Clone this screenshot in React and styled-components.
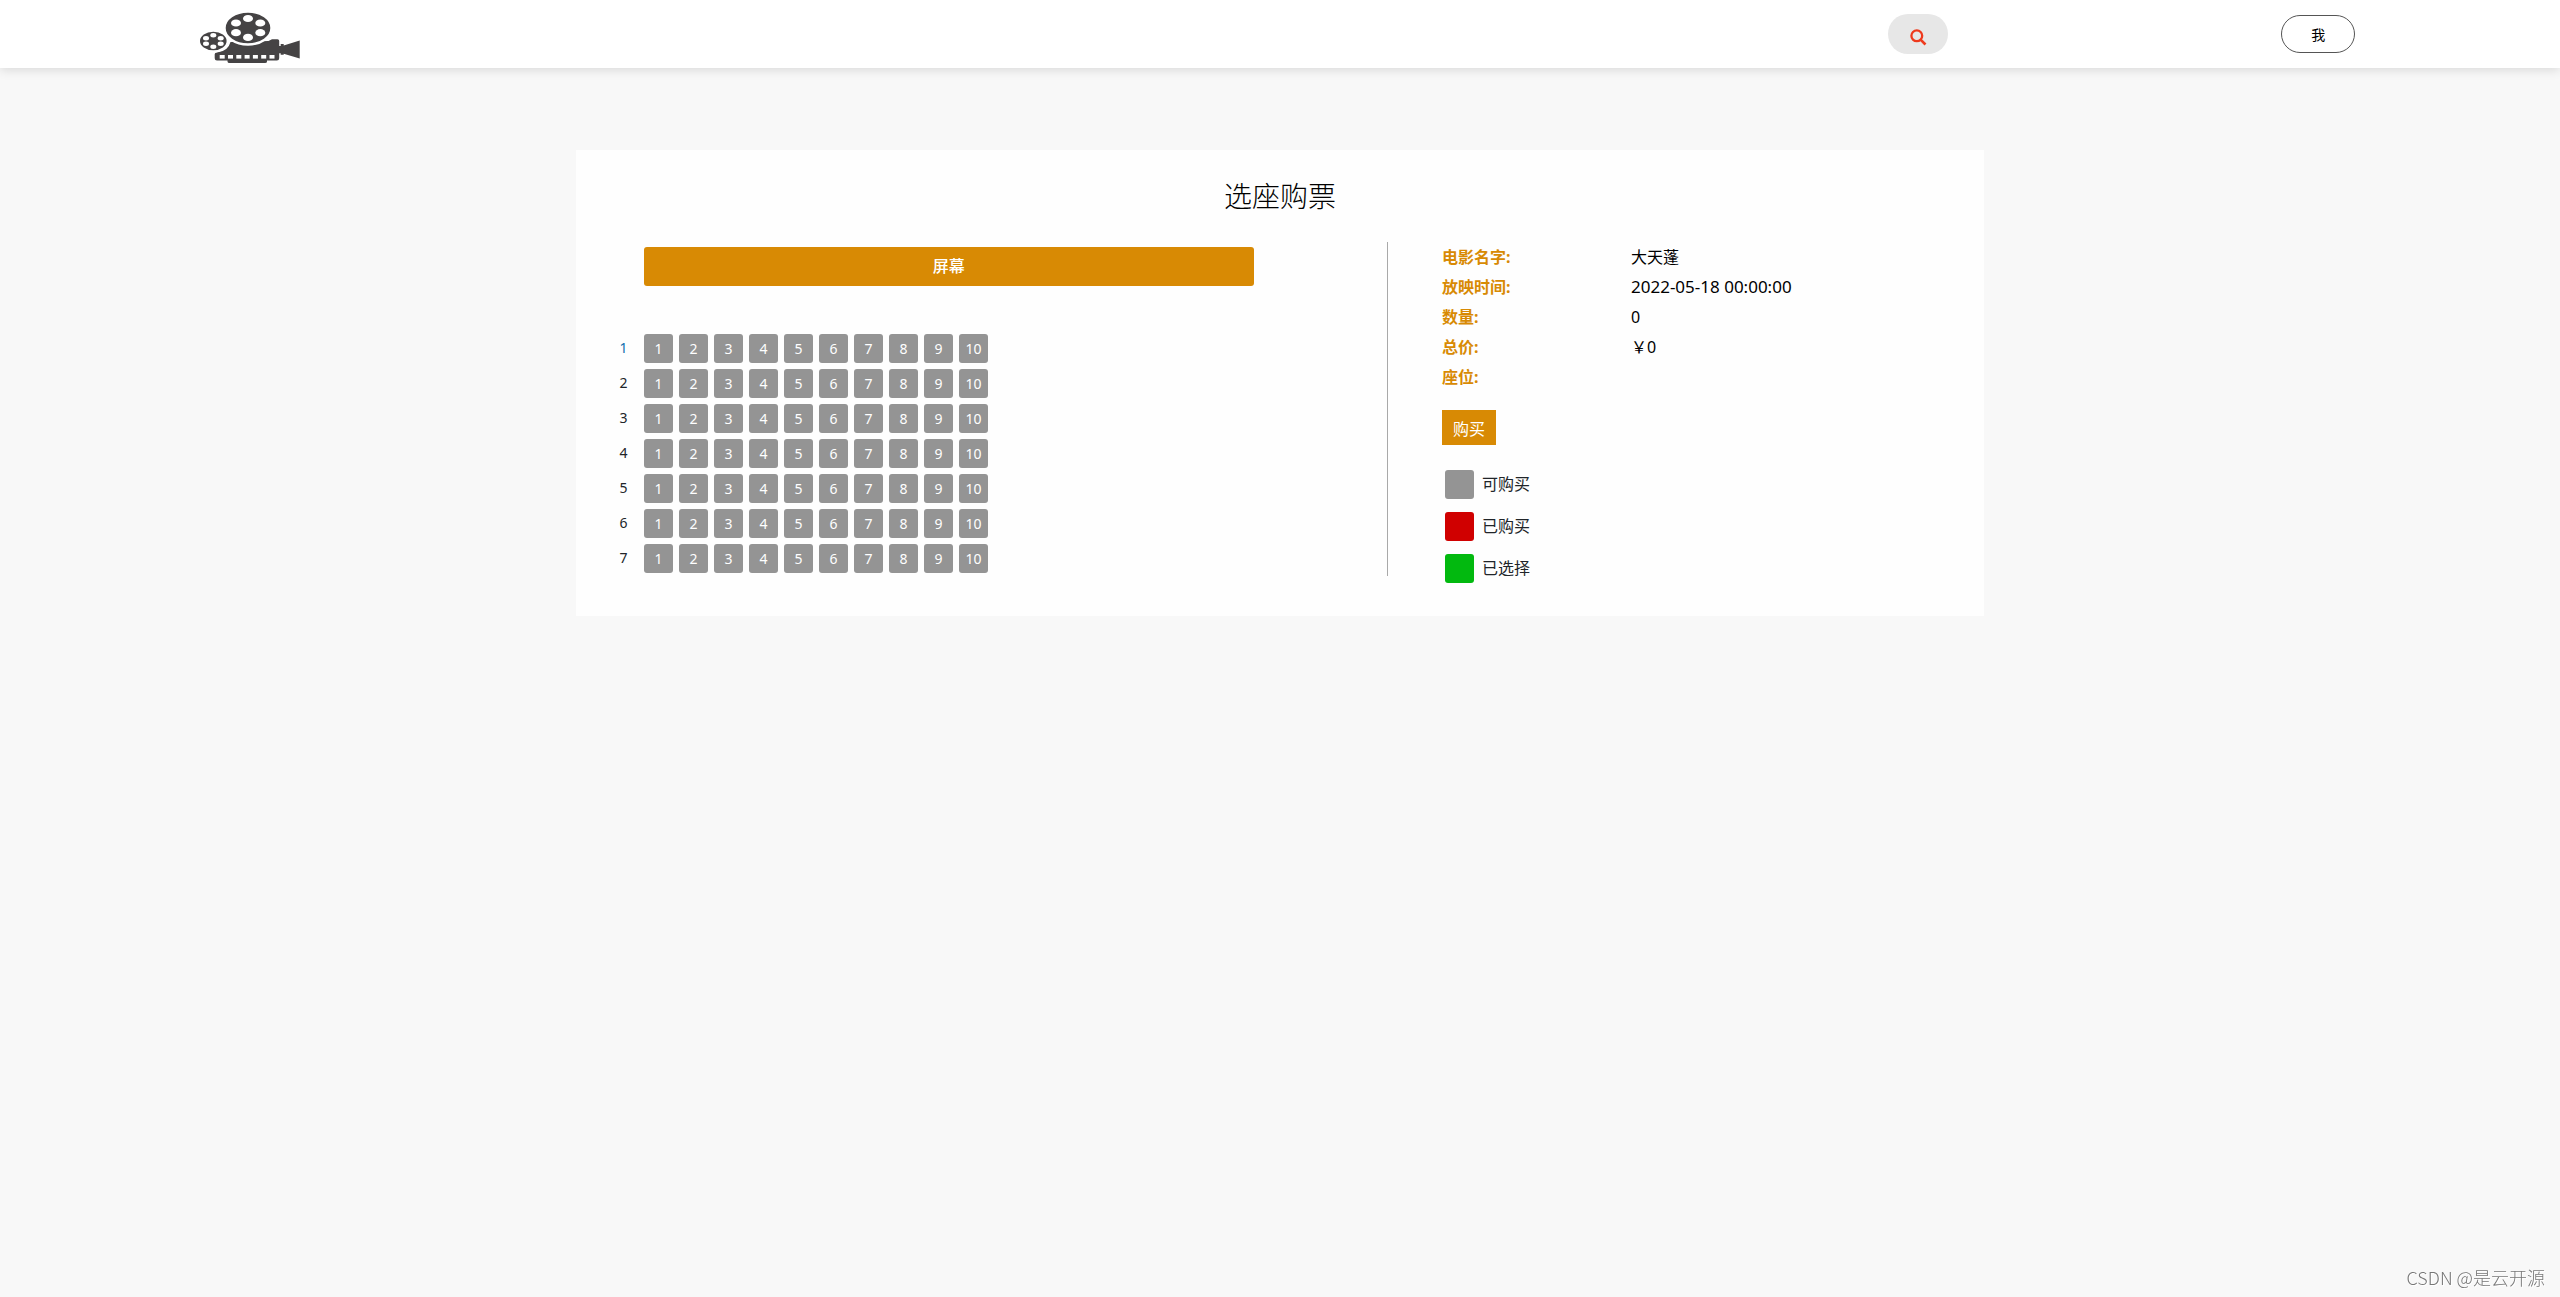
import React, { useState } from "react";
import styled, { createGlobalStyle } from "styled-components";

const GlobalStyle = createGlobalStyle`
  * {
    box-sizing: border-box;
  }
  body {
    margin: 0;
    background: #f8f8f8;
    color: #212529;
    font-family: "Noto Sans", "Noto Sans CJK SC", sans-serif;
    font-size: 16px;
  }
  button {
    font-family: inherit;
    cursor: pointer;
  }
`;

const StHeader = styled.header`
  display: flex;
  align-items: center;
  height: 68px;
  padding: 0 8% 0 200px;
  background: #ffffff;
  box-shadow: 0 2px 10px rgba(0, 0, 0, 0.13);
`;

const StLogo = styled.a`
  display: block;
  margin-top: 8px;
  margin-right: auto;
  svg {
    display: block;
  }
`;

const StSearch = styled.button`
  display: flex;
  justify-content: center;
  align-items: center;
  width: 60px;
  height: 40px;
  margin-right: 13vw;
  padding: 6px 0 0;
  border: none;
  border-radius: 20px;
  background: #e7e7e7;
`;

const StUser = styled.button`
  width: 74px;
  height: 38px;
  padding: 0;
  border: 1px solid #555555;
  border-radius: 19px;
  background: #ffffff;
  color: #000000;
  font-size: 14px;
`;

const StPanel = styled.main`
  width: 55%;
  margin: 82px auto 0;
  padding: 24px 27px 33px;
  background: #fefefe;
`;

const StTitle = styled.h1`
  margin: 0 0 24px;
  color: #000000;
  font-size: 28px;
  font-weight: 300;
  line-height: 44px;
  text-align: center;
`;

const StBody = styled.div`
  display: grid;
  grid-template-columns: 785fr 569fr;
  align-items: start;
`;

const StHall = styled.section`
  padding: 5px 0 3px;
  border-right: 1px solid #a9a9a9;
`;

const StScreen = styled.div`
  height: 39px;
  margin: 0 17% 48px 41px;
  border-radius: 3px;
  background: #d88a04;
  color: #ffffff;
  font-weight: 500;
  line-height: 39px;
  text-align: center;
`;

const StSeats = styled.div`
  display: flex;
  flex-direction: column;
  gap: 6px;
`;

const StRow = styled.div`
  display: flex;
  gap: 6px;
`;

const StRowNumber = styled.span`
  width: 35px;
  padding-left: 6px;
  color: ${({ $active }) => ($active ? "#0f6fae" : "#212529")};
  font-size: 14px;
  line-height: 28px;
  text-align: center;
`;

const seatColors = {
  free: "#949494",
  sold: "#d00000",
  picked: "#02b90f",
};

const StSeat = styled.button`
  width: 29px;
  height: 29px;
  padding: 0;
  border: none;
  border-radius: 3px;
  background: ${({ $state }) => seatColors[$state]};
  color: #ffffff;
  font-size: 14px;
  line-height: 28px;
`;

const StOrder = styled.section`
  padding: 0 0 0 54px;
`;

const StInfo = styled.dl`
  display: grid;
  grid-template-columns: 189px 1fr;
  grid-auto-rows: 30px;
  margin: 0 0 18px;
  line-height: 30px;
  dt {
    color: #d88a04;
    font-weight: 700;
  }
  dd {
    margin: 0;
    color: #000000;
  }
  time {
    font-size: 17px;
  }
`;

const StBuy = styled.button`
  display: block;
  width: 54px;
  height: 35px;
  margin-bottom: 25px;
  padding: 0;
  border: none;
  background: #d88a04;
  color: #ffffff;
  font-size: 16px;
`;

const StLegend = styled.ul`
  display: flex;
  flex-direction: column;
  gap: 13px;
  margin: 0;
  padding: 0 0 0 3px;
  list-style: none;
  li {
    display: flex;
    gap: 8px;
    height: 29px;
    line-height: 28px;
  }
`;

const StSwatch = styled.span`
  width: 29px;
  height: 29px;
  border-radius: 3px;
  background: ${({ $state }) => seatColors[$state]};
`;

const StMark = styled.div`
  position: fixed;
  right: 15px;
  bottom: 6px;
  color: #777777;
  font-family: "Noto Sans CJK SC", sans-serif;
  font-size: 18px;
  font-weight: 300;
  line-height: 28px;
  text-shadow: 1px 1px 0 #ffffff;
`;

const bigHoles = [
  [48, 6.5],
  [36, 11],
  [60.3, 11],
  [36, 20.7],
  [60.3, 20.7],
  [48, 25.4],
];
const smallHoles = [
  [13.3, 23.3],
  [6, 26.3],
  [20.7, 26.3],
  [6, 31.7],
  [20.7, 31.7],
  [13.3, 34.7],
];

const Logo = () => (
  <svg width="101" height="52" viewBox="0 0 101 52" fill="#454344">
    <path d="M17 40.5q11-1 13.500-10.500l38-1 3.500-1.700h5.500q1.700 0 1.700 1.700v5h1.500v-2h3v1.500l16-5v18l-16-4.700v1h-3v-1.500h-1.500v5q0 2.300-2.300 2.300H67v1q0 1.500-2 1.500H29.500q-2 0-2-1.500v-1H17q-2.300 0-2.300-2.300v-4q0-1.800 2.300-1.800z" />
    <g stroke="#fff" strokeWidth="2.400">
      <ellipse cx="48" cy="16" rx="23.500" ry="16.500" />
      <ellipse cx="13.300" cy="29" rx="14.500" ry="10.400" />
    </g>
    <g fill="#fff">
      {bigHoles.map(([x, y]) => (
        <ellipse key={`${x}-${y}`} cx={x} cy={y} rx="5" ry="3.600" />
      ))}
      {smallHoles.map(([x, y]) => (
        <ellipse key={`${x}-${y}`} cx={x} cy={y} rx="3" ry="2.200" />
      ))}
      {[0, 1, 2, 3, 4, 5, 6].map((n) => (
        <rect key={n} x={19.7 + n * 8.3} y="43" width="5" height="3.600" />
      ))}
    </g>
  </svg>
);

const rows = [1, 2, 3, 4, 5, 6, 7];
const cols = [1, 2, 3, 4, 5, 6, 7, 8, 9, 10];

const App = () => {
  const [picked, setPicked] = useState([]);

  const toggleSeat = (seat) => {
    setPicked((prev) =>
      prev.includes(seat) ? prev.filter((s) => s !== seat) : [...prev, seat]
    );
  };

  return (
    <>
      <GlobalStyle />
      <StHeader>
        <StLogo href="#">
          <Logo />
        </StLogo>
        <StSearch type="button">
          <svg width="17" height="17" viewBox="0 0 17 17" fill="none" stroke="#ee3a1d">
            <circle cx="6.800" cy="6.800" r="5.400" strokeWidth="2.300" />
            <path d="M10.800 10.800L15.500 15.500" strokeWidth="2.600" />
          </svg>
        </StSearch>
        <StUser type="button">我</StUser>
      </StHeader>
      <StPanel>
        <StTitle>选座购票</StTitle>
        <StBody>
          <StHall>
            <StScreen>屏幕</StScreen>
            <StSeats>
              {rows.map((row) => (
                <StRow key={row}>
                  <StRowNumber $active={row === 1}>{row}</StRowNumber>
                  {cols.map((col) => {
                    const seat = `${row}-${col}`;
                    return (
                      <StSeat
                        key={seat}
                        type="button"
                        $state={picked.includes(seat) ? "picked" : "free"}
                        onClick={() => toggleSeat(seat)}
                      >
                        {col}
                      </StSeat>
                    );
                  })}
                </StRow>
              ))}
            </StSeats>
          </StHall>
          <StOrder>
            <StInfo>
              <dt>电影名字:</dt>
              <dd>大天蓬</dd>
              <dt>放映时间:</dt>
              <dd>
                <time>2022-05-18 00:00:00</time>
              </dd>
              <dt>数量:</dt>
              <dd>{picked.length}</dd>
              <dt>总价:</dt>
              <dd>￥0</dd>
              <dt>座位:</dt>
              <dd>{picked.join(" ")}</dd>
            </StInfo>
            <StBuy type="button">购买</StBuy>
            <StLegend>
              <li>
                <StSwatch $state="free" />
                可购买
              </li>
              <li>
                <StSwatch $state="sold" />
                已购买
              </li>
              <li>
                <StSwatch $state="picked" />
                已选择
              </li>
            </StLegend>
          </StOrder>
        </StBody>
      </StPanel>
      <StMark>CSDN @是云开源</StMark>
    </>
  );
};

export default App;
